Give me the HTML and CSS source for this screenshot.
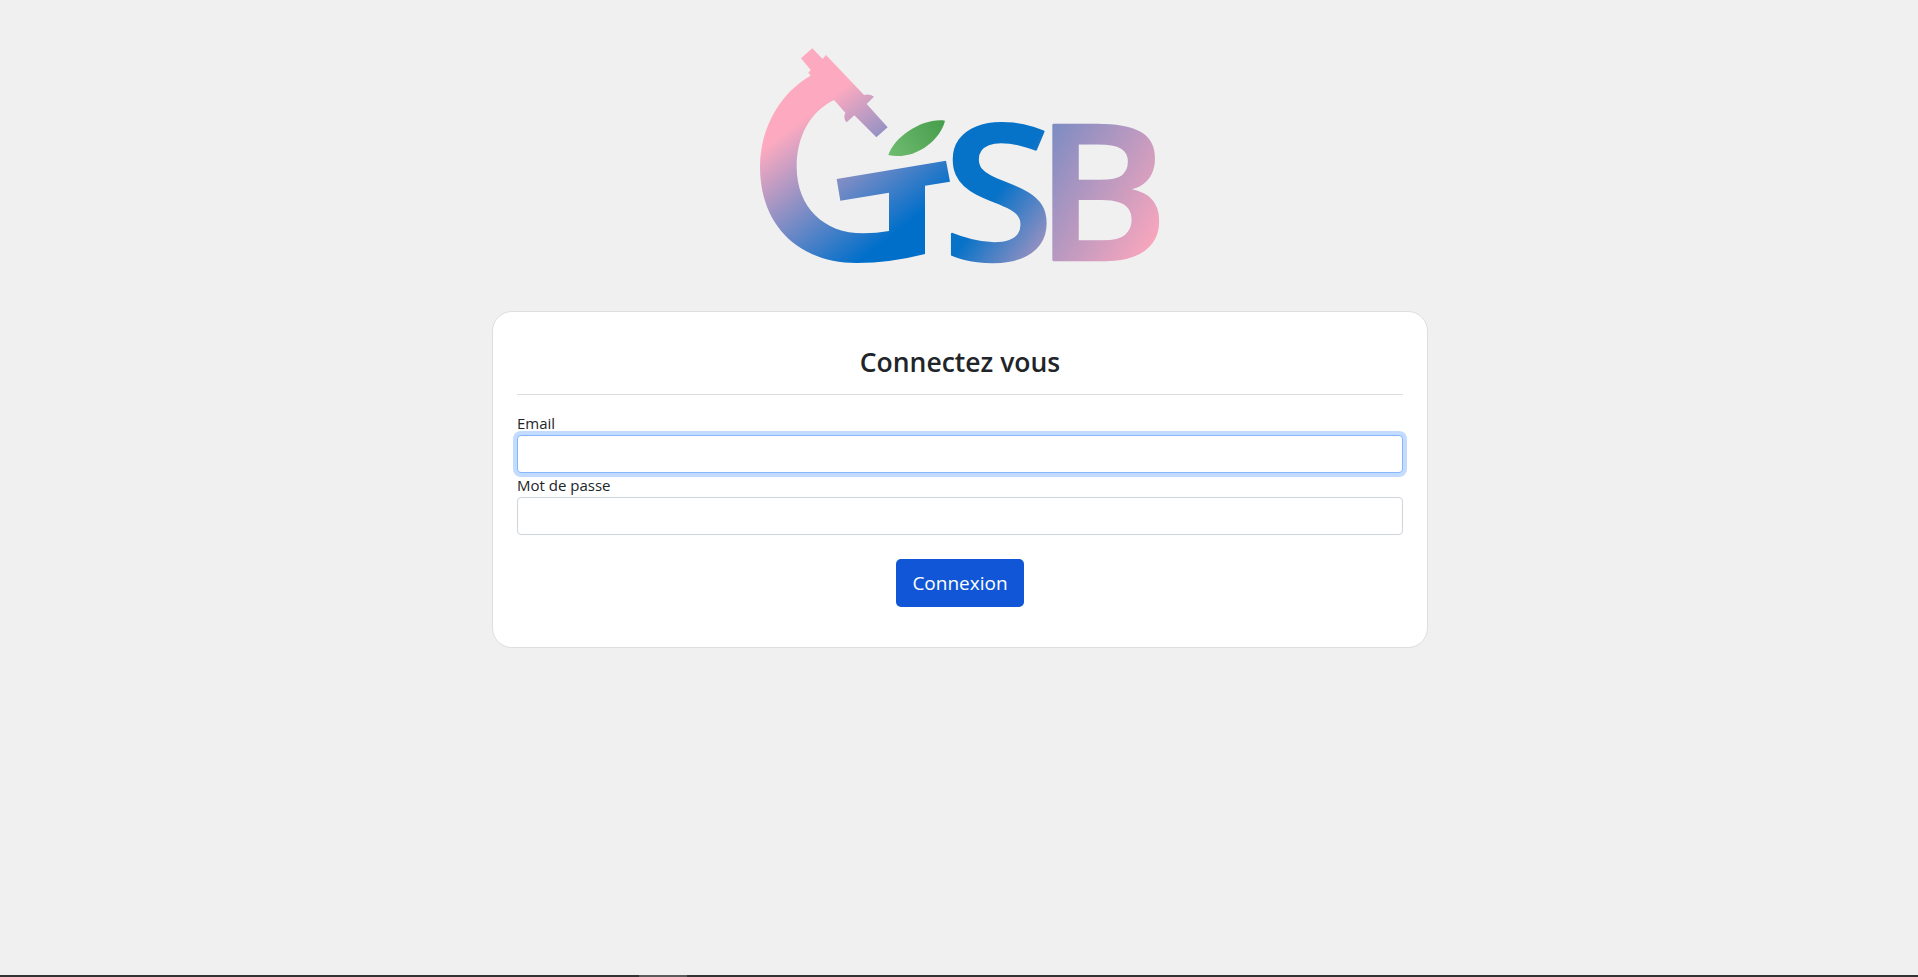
FILE: index.html
```html
<!DOCTYPE html>
<html lang="fr">
<head>
<meta charset="utf-8">
<title>Connexion - GSB</title>
<link rel="stylesheet" href="styles.css">
</head>
<body>
<div class="page">
  <main class="content">
    <svg class="logo" viewBox="0 0 1320 864" role="img" aria-label="GSB">
      <defs>
        <linearGradient id="brand-g" gradientUnits="userSpaceOnUse" x1="0" y1="0" x2="600" y2="780">
          <stop offset="0.33" stop-color="#fdaac0"/>
          <stop offset="0.78" stop-color="#006fca"/>
        </linearGradient>
        <linearGradient id="brand-s" gradientUnits="userSpaceOnUse" x1="0" y1="0" x2="1100" y2="770" gradientTransform="scale(.9346 1) translate(-607 -692)">
          <stop offset="0.68" stop-color="#0672c8"/>
          <stop offset="0.93" stop-color="#f7a6bd"/>
        </linearGradient>
        <linearGradient id="brand-b" gradientUnits="userSpaceOnUse" x1="0" y1="0" x2="1213" y2="728" gradientTransform="scale(.9346 1) translate(-607 -692)">
          <stop offset="0.37" stop-color="#0672c8"/>
          <stop offset="0.98" stop-color="#f7a6bd"/>
        </linearGradient>
        <linearGradient id="leaf" gradientUnits="userSpaceOnUse" x1="460" y1="375" x2="610" y2="275">
          <stop offset="0" stop-color="#6dba6e"/>
          <stop offset="1" stop-color="#479e4c"/>
        </linearGradient>
      </defs>
      <path fill="url(#brand-g)" d="M183 85 L217 55 L248 87 L258 75 L372 195 Q388 190 402 200 L380 222 L443 292 L409 322 L343 256 L320 277 Q308 265 316 248 L282 210 C210 245 170 320 170 410 C170 530 250 610 370 610 Q410 610 447 603 L447 488 L301 512 L290 447 L618 392 L630 455 L555 467 L555 672 Q450 699 350 699 C180 699 60 590 60 410 C60 290 125 185 212 137 L205 128 L212 120 Z"/>
      <path fill="url(#leaf)" d="M445 375 C465 315 555 262 615 272 C600 335 520 392 445 375 Z"/>
      <text class="logo-letters" transform="translate(607 690) scale(1.08 1)"><tspan class="letter-s">S</tspan><tspan class="letter-b" dx="-55">B</tspan></text>
    </svg>
    <section class="card">
      <h1 class="card-title">Connectez vous</h1>
      <hr class="divider">
      <form class="form">
        <label class="field-label" for="email">Email</label>
        <input class="field field-focus" id="email" type="email">
        <label class="field-label" for="password">Mot de passe</label>
        <input class="field" id="password" type="password">
        <button class="submit" type="button">Connexion</button>
      </form>
    </section>
  </main>
  <footer class="taskbar"><span class="taskbar-gap"></span><span class="taskbar-thumb"></span></footer>
</div>
</body>
</html>
```
FILE: styles.css
```css
* { box-sizing: border-box; }
html, body { margin: 0; height: 100%; }
body {
  background: #f0f0f0;
  color: #212529;
  font-family: "Open Sans", "Noto Sans", sans-serif;
  overflow: hidden;
}
.page { min-height: 100vh; display: flex; flex-direction: column; }
.content {
  flex: 1;
  display: flex;
  flex-direction: column;
  align-items: center;
  padding: 30px 0 0 2px;
}
.logo { display: block; width: 440px; height: 288px; margin-bottom: -7px; }
.logo-letters {
  font-family: "Open Sans", sans-serif;
  font-weight: 600;
  font-size: 566px;
  stroke-width: 7px;
  stroke-linejoin: round;
}
.letter-s { fill: url(#brand-s); stroke: url(#brand-s); }
.letter-b { fill: url(#brand-b); stroke: url(#brand-b); }
.card {
  width: 936px;
  background: #fff;
  border: 1px solid #dedede;
  border-radius: 20px;
  padding: 24px 24px 40px;
}
.card-title {
  margin: 0;
  padding-top: 9px;
  height: 58px;
  text-align: center;
  font-size: 26.5px;
  line-height: 34px;
  font-weight: 600;
}
.divider { margin: 0 0 16px; border: 0; border-top: 1px solid #dedede; }
.form { display: flex; flex-direction: column; align-items: stretch; }
.field-label { font-size: 15px; line-height: 24px; position: relative; z-index: 1; }
.field {
  display: block;
  width: 100%;
  height: 38px;
  border: 1px solid #ced4da;
  border-radius: 4px;
  background: #fff;
  outline: 0;
}
.field-focus {
  border-color: #86b7fe;
  box-shadow: 0 0 0 4px rgba(13, 110, 253, .25);
}
.submit {
  align-self: center;
  width: 128px;
  height: 48px;
  margin-top: 24px;
  border: 0;
  border-radius: 5px;
  background: #1056d6;
  color: #fff;
  font-family: inherit;
  font-size: 19px;
}
.taskbar { display: flex; height: 2px; background: #333; }
.taskbar-gap { width: 639px; }
.taskbar-thumb { width: 48px; background: #5a5a5a; }
```
